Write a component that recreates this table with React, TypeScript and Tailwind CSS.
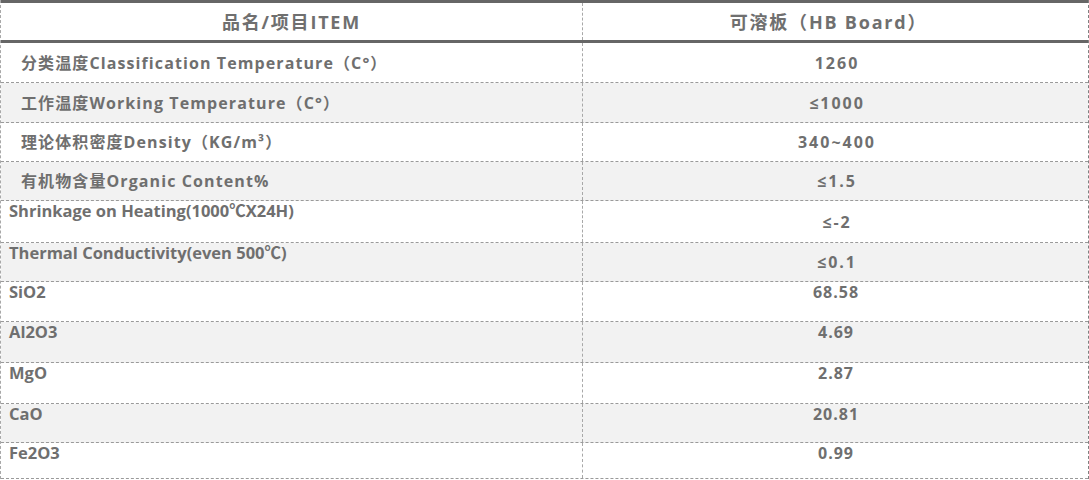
import React from "react";

type Row = {
  left: string;
  right: string;
  h: number;
  gray: boolean;
  kind: "a" | "b" | "c";
};

const rows: Row[] = [
  { left: "分类温度Classification Temperature（C°）", right: "1260", h: 40, gray: false, kind: "a" },
  { left: "工作温度Working Temperature（C°）", right: "≤1000", h: 40, gray: true, kind: "a" },
  { left: "理论体积密度Density（KG/m³）", right: "340~400", h: 39, gray: false, kind: "a" },
  { left: "有机物含量Organic Content%", right: "≤1.5", h: 39, gray: true, kind: "a" },
  { left: "Shrinkage on Heating(1000℃X24H)", right: "≤-2", h: 42, gray: false, kind: "b" },
  { left: "Thermal Conductivity(even 500℃)", right: "≤0.1", h: 39, gray: true, kind: "b" },
  { left: "SiO2", right: "68.58", h: 40, gray: false, kind: "c" },
  { left: "Al2O3", right: "4.69", h: 41, gray: true, kind: "c" },
  { left: "MgO", right: "2.87", h: 41, gray: false, kind: "c" },
  { left: "CaO", right: "20.81", h: 39, gray: true, kind: "c" },
  { left: "Fe2O3", right: "0.99", h: 36, gray: false, kind: "c" },
];

const font = { fontFamily: '"Open Sans", "Noto Sans CJK SC", sans-serif' };

export default function App() {
  return (
    <div className="w-[1089px] h-[480px] bg-white overflow-hidden text-[#6f6f6f] font-bold" style={font}>
      <div className="border-l border-r border-dashed border-l-[#a8a8a8] border-r-[#808080] w-[1089px]">
        {/* header */}
        <div className="grid grid-cols-[582px_1fr] h-[43px] border-t-[3px] border-b-[3px] border-solid border-[#666666] box-border">
          <div className="flex items-center justify-center border-r border-dashed border-r-[#a8a8a8] text-[18px] tracking-[1.8px] pt-[1px]">
            品名/项目ITEM
          </div>
          <div className="flex items-center justify-center text-[18px] tracking-[1.8px] pr-[14px] pt-[1px]">
            可溶板（HB Board）
          </div>
        </div>
        {rows.map((r, i) => (
          <div
            key={i}
            className={`grid grid-cols-[582px_1fr] box-border border-b border-dashed border-b-[#9a9a9a] ${r.gray ? "bg-[#f2f2f2]" : "bg-white"}`}
            style={{ height: r.h }}
          >
            {r.kind === "a" ? (
              <div className="flex items-center pl-[20px] border-r border-dashed border-r-[#a8a8a8] text-[16px] tracking-[1.1px]">
                {r.left}
              </div>
            ) : (
              <div className="flex items-start pl-[8px] border-r border-dashed border-r-[#a8a8a8] text-[16.5px] leading-[20px]">
                {r.left}
              </div>
            )}
            {r.kind === "c" ? (
              <div className="flex items-start justify-center pl-[1px] text-[16px] tracking-[1px] leading-[20px]">
                {r.right}
              </div>
            ) : (
              <div className="flex items-center justify-center pl-[3px] text-[16px] tracking-[2px]">
                {r.right}
              </div>
            )}
          </div>
        ))}
      </div>
    </div>
  );
}
